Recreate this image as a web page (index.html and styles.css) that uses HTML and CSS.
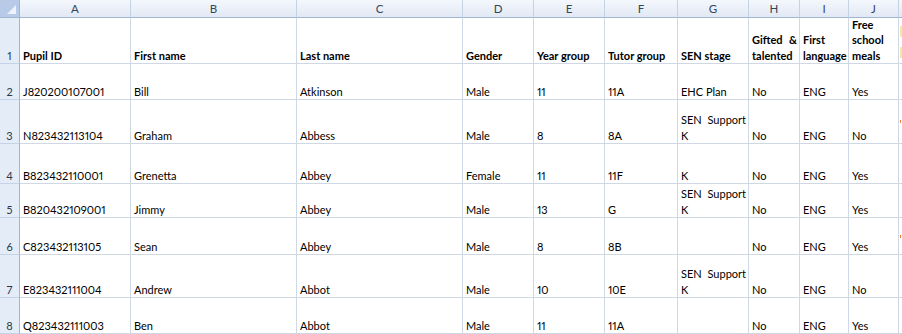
FILE: index.html
```html
<!DOCTYPE html>
<html lang="en">
<head>
<meta charset="utf-8">
<title>Pupils</title>
<link rel="stylesheet" href="styles.css">
</head>
<body>
<div class="sheet">
  <div class="corner"><span class="tri"></span></div>
  <div class="ch">A</div><div class="ch">B</div><div class="ch">C</div><div class="ch">D</div><div class="ch">E</div><div class="ch">F</div><div class="ch">G</div><div class="ch">H</div><div class="ch">I</div><div class="ch">J</div><div class="ch k"></div>

  <div class="rh">1</div>
  <div class="c b">Pupil ID</div><div class="c b">First name</div><div class="c b">Last name</div><div class="c b">Gender</div><div class="c b">Year group</div><div class="c b">Tutor group</div><div class="c b">SEN stage</div>
  <div class="c b"><div class="wrap"><span class="jl">Gifted &amp;</span>talented</div></div>
  <div class="c b"><div class="wrap">First<br>language</div></div>
  <div class="c b"><div class="wrap">Free<br>school<br>meals</div></div>
  <div class="c k"><span class="ky"><i></i><i></i></span></div>

  <div class="rh">2</div>
  <div class="c">J820200107001</div><div class="c">Bill</div><div class="c">Atkinson</div><div class="c">Male</div><div class="c">11</div><div class="c">11A</div><div class="c">EHC Plan</div><div class="c">No</div><div class="c">ENG</div><div class="c">Yes</div><div class="c k"></div>

  <div class="rh">3</div>
  <div class="c">N823432113104</div><div class="c">Graham</div><div class="c">Abbess</div><div class="c">Male</div><div class="c">8</div><div class="c">8A</div><div class="c"><div class="wrap"><span class="jl">SEN Support</span>K</div></div><div class="c">No</div><div class="c">ENG</div><div class="c">No</div><div class="c k"><span class="ko"></span></div>

  <div class="rh">4</div>
  <div class="c">B823432110001</div><div class="c">Grenetta</div><div class="c">Abbey</div><div class="c">Female</div><div class="c">11</div><div class="c">11F</div><div class="c">K</div><div class="c">No</div><div class="c">ENG</div><div class="c">Yes</div><div class="c k"></div>

  <div class="rh">5</div>
  <div class="c">B820432109001</div><div class="c">Jimmy</div><div class="c">Abbey</div><div class="c">Male</div><div class="c">13</div><div class="c">G</div><div class="c"><div class="wrap"><span class="jl">SEN Support</span>K</div></div><div class="c">No</div><div class="c">ENG</div><div class="c">Yes</div><div class="c k"></div>

  <div class="rh">6</div>
  <div class="c">C823432113105</div><div class="c">Sean</div><div class="c">Abbey</div><div class="c">Male</div><div class="c">8</div><div class="c">8B</div><div class="c"></div><div class="c">No</div><div class="c">ENG</div><div class="c">Yes</div><div class="c k"><span class="ko"></span></div>

  <div class="rh">7</div>
  <div class="c">E823432111004</div><div class="c">Andrew</div><div class="c">Abbot</div><div class="c">Male</div><div class="c">10</div><div class="c">10E</div><div class="c"><div class="wrap"><span class="jl">SEN Support</span>K</div></div><div class="c">No</div><div class="c">ENG</div><div class="c">No</div><div class="c k"></div>

  <div class="rh">8</div>
  <div class="c">Q823432111003</div><div class="c">Ben</div><div class="c">Abbot</div><div class="c">Male</div><div class="c">11</div><div class="c">11A</div><div class="c"></div><div class="c">No</div><div class="c">ENG</div><div class="c">Yes</div><div class="c k"></div>
</div>
</body>
</html>
```

FILE: styles.css
```css
html, body {
  margin: 0;
  padding: 0;
  background: #ffffff;
}
body {
  width: 902px;
  height: 334px;
  overflow: hidden;
  font-family: Lato, "Open Sans", "Liberation Sans", sans-serif;
  font-size: 11px;
  font-variant-numeric: proportional-nums;
  color: #000;
}
.sheet {
  display: grid;
  grid-template-columns: 20px 111px 166px 166px 71px 71px 73px 71px 51px 49px 50px 20px;
  grid-template-rows: 18px 46px 36px 44px 40px 34px 37px 43px 36px;
}
.sheet > div {
  box-sizing: border-box;
  overflow: hidden;
}
.corner {
  background: #b7cbe8;
  border-right: 1px solid #9eb6ce;
  border-bottom: 1px solid #9eb6ce;
  display: flex;
  align-items: flex-end;
  justify-content: flex-end;
  padding: 0 3px 3px 0;
}
.tri {
  width: 0;
  height: 0;
  border-left: 9px solid transparent;
  border-bottom: 9px solid #eef3fb;
}
.ch {
  background: linear-gradient(#f4f7fc, #e2e9f4);
  border-right: 1px solid #c5d2e4;
  border-bottom: 1px solid #9eb6ce;
  display: flex;
  align-items: center;
  justify-content: center;
  color: #34465a;
  font-size: 11.5px;
  line-height: 17px;
}
.rh {
  background: #e4ecf7;
  border-right: 1px solid #9eb6ce;
  border-bottom: 1px solid #c5d3e6;
  display: flex;
  align-items: flex-end;
  justify-content: center;
  color: #2b3a4a;
  line-height: 15px;
}
.c {
  border-right: 1px solid #d0d7e5;
  border-bottom: 1px solid #d0d7e5;
  display: flex;
  align-items: flex-end;
  padding: 0 2px 0 3px;
  line-height: 15px;
  white-space: nowrap;
}
.b {
  font-weight: 700;
}
.wrap {
  white-space: normal;
  width: 100%;
  line-height: 15.5px;
}
.jl {
  display: block;
  text-align: justify;
  text-align-last: justify;
}
.k {
  border-right: none;
  padding-left: 1px;
}
.ky {
  display: flex;
  flex-direction: column;
  gap: 10px;
  margin-bottom: 5px;
}
.ky i {
  display: block;
  width: 2px;
  height: 11px;
  background: #f1e9a6;
}
.ko {
  display: block;
  width: 1px;
  height: 3px;
  background: #e3843c;
  align-self: center;
}
```
